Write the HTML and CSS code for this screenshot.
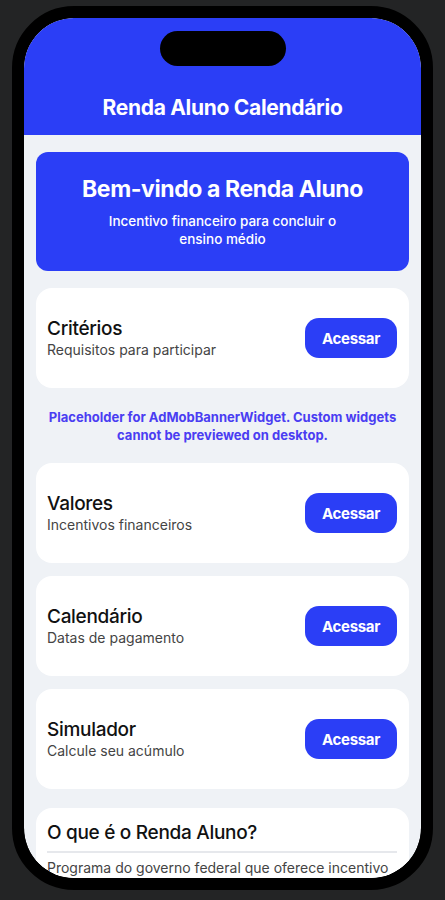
FILE: index.html
```html
<!DOCTYPE html>
<html lang="pt-BR">
<head>
<meta charset="utf-8">
<title>Renda Aluno Calendário</title>
<link rel="stylesheet" href="styles.css">
</head>
<body>
<div class="phone">
  <div class="screen">
    <div class="notch"></div>
    <header class="appbar">
      <h1 class="appbar-title">Renda Aluno Calendário</h1>
    </header>
    <main class="content">
      <section class="hero">
        <h2 class="hero-title">Bem-vindo a Renda Aluno</h2>
        <p class="hero-sub">Incentivo financeiro para concluir o<br>ensino médio</p>
      </section>

      <div class="card">
        <div class="card-text">
          <div class="card-title">Critérios</div>
          <div class="card-sub">Requisitos para participar</div>
        </div>
        <button class="btn">Acessar</button>
      </div>

      <p class="ad">Placeholder for AdMobBannerWidget. Custom widgets<br>cannot be previewed on desktop.</p>

      <div class="card">
        <div class="card-text">
          <div class="card-title">Valores</div>
          <div class="card-sub">Incentivos financeiros</div>
        </div>
        <button class="btn">Acessar</button>
      </div>

      <div class="card">
        <div class="card-text">
          <div class="card-title">Calendário</div>
          <div class="card-sub">Datas de pagamento</div>
        </div>
        <button class="btn">Acessar</button>
      </div>

      <div class="card">
        <div class="card-text">
          <div class="card-title">Simulador</div>
          <div class="card-sub">Calcule seu acúmulo</div>
        </div>
        <button class="btn">Acessar</button>
      </div>

      <div class="info">
        <div class="info-title">O que é o Renda Aluno?</div>
        <div class="info-divider"></div>
        <div class="info-text">Programa do governo federal que oferece incentivo financeiro</div>
      </div>
    </main>
  </div>
</div>
</body>
</html>
```

FILE: styles.css
```css
* { box-sizing: border-box; }
html, body {
  margin: 0;
  padding: 0;
  background: #232425;
  font-family: Inter, "Noto Sans", sans-serif;
}
.phone {
  margin: 6px 0 0 12px;
  width: 421px;
  height: 884px;
  border: 12px solid #000;
  border-radius: 62px;
  background: #000;
  overflow: hidden;
}
.screen {
  position: relative;
  width: 100%;
  height: 100%;
  border-radius: 50px;
  overflow: hidden;
  background: #eff2f6;
}
.notch {
  position: absolute;
  left: 136px;
  top: 13px;
  width: 126px;
  height: 35px;
  background: #000;
  border-radius: 18px;
}
.appbar {
  height: 117px;
  background: #2b3ef6;
  display: flex;
  align-items: flex-end;
  justify-content: center;
  padding-bottom: 15px;
}
.appbar-title {
  margin: 0;
  color: #fff;
  font-size: 21px;
  font-weight: 700;
  letter-spacing: -0.3px;
}
.content {
  padding: 17px 12px 0;
  display: flex;
  flex-direction: column;
  gap: 13px;
}
.hero {
  background: #2b3ef6;
  border-radius: 12px;
  height: 119px;
  display: flex;
  flex-direction: column;
  align-items: center;
  justify-content: center;
  text-align: center;
  color: #fff;
  margin-bottom: 4px;
}
.hero-title {
  margin: 0 0 9px;
  font-size: 23px;
  font-weight: 700;
  letter-spacing: -0.4px;
}
.hero-sub {
  margin: 0;
  font-size: 13.5px;
  font-weight: 500;
  line-height: 18px;
}
.card {
  background: #fff;
  border-radius: 16px;
  height: 100px;
  padding: 0 12px 0 11px;
  display: flex;
  align-items: center;
  justify-content: space-between;
}
.card-title {
  font-size: 19px;
  font-weight: 500;
  color: #111;
  letter-spacing: -0.3px;
  line-height: 22px;
}
.card-sub {
  font-size: 14px;
  color: #444;
  line-height: 17px;
  margin-top: 1px;
}
.btn {
  width: 92px;
  height: 40px;
  border: none;
  border-radius: 14px;
  background: #2b3ef6;
  color: #fff;
  font-family: Inter, "Noto Sans", sans-serif;
  font-size: 15px;
  font-weight: 700;
  letter-spacing: -0.3px;
}
.ad {
  margin: 7px 0 6px;
  text-align: center;
  color: #4a3df2;
  font-size: 13px;
  font-weight: 700;
  line-height: 18px;
}
.info {
  background: #fff;
  border-radius: 16px;
  height: 120px;
  padding: 14px 12px 0 11px;
  margin-top: 6px;
}
.info-title {
  font-size: 19px;
  font-weight: 500;
  color: #111;
  letter-spacing: -0.3px;
  line-height: 22px;
}
.info-divider {
  height: 2px;
  background: #e6e8ec;
  margin: 7px 0 6px;
}
.info-text {
  font-size: 14px;
  color: #444;
  line-height: 18px;
}
```
